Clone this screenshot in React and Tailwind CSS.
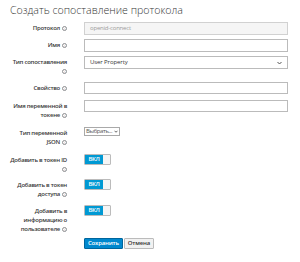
import React from "react";

const Info = () => (
    <span className="inline-flex items-center justify-center w-[5px] h-[5px] rounded-full border-[0.7px] border-[#8b8d8f] text-[3.5px] leading-none text-[#8b8d8f] align-middle ml-[2px] font-normal">i</span>
);

function Row({label, children, className = ""}) {
    return (
        <div className={`flex items-start ${className}`}>
            <label className="w-[57px] shrink-0 text-right text-[6px] tracking-[-0.25px] leading-[9px] font-semibold text-[#3a3a3a] pt-[2px]">
                {label}
            </label>
            <div className="flex-1 ml-[17px]">{children}</div>
        </div>
    );
}

function Toggle() {
    return (
        <div className="flex h-[11px] w-[27px] border border-[#bbbbbb] rounded-[1px] overflow-hidden">
            <div className="w-[18px] bg-[#0099d3] text-white text-[6px] tracking-[-0.3px] font-semibold flex items-center justify-center">ВКЛ</div>
            <div className="flex-1 bg-[#f5f5f5]" />
        </div>
    );
}

export default function App() {
    return (
        <div className="w-[300px] h-[262px] bg-white px-[10px] pr-[12px] overflow-hidden" style={{fontFamily: '"Open Sans", "Noto Sans", sans-serif'}}>
            <h1 className="text-[10.6px] leading-[14px] font-light text-[#363636] pt-[3px]">Создать сопоставление протокола</h1>

            <div className="mt-[5px]">
                <Row label={<>Протокол<Info /></>} className="mb-[4px]">
                    <div className="h-[13px] border border-[#d1d1d1] bg-[#f5f5f5] text-[6px] tracking-[-0.2px] text-[#9c9c9c] flex items-center px-[5px]">openid-connect</div>
                </Row>
                <Row label={<>Имя<Info /></>} className="mb-[4px]">
                    <div className="h-[13px] border border-[#bbbbbb] bg-white" />
                </Row>
                <Row label={<>Тип сопоставления<br /><Info /></>} className="mb-[6px]">
                    <div className="h-[13px] border border-[#bbbbbb] bg-white text-[6px] tracking-[-0.1px] text-[#363636] flex items-center justify-between px-[5px]">
                        <span>User Property</span>
                        <svg width="5" height="4" viewBox="0 0 10 8"><path d="M1 2 L5 6 L9 2" fill="none" stroke="#555" strokeWidth="2" /></svg>
                    </div>
                </Row>
                <Row label={<>Свойство<Info /></>} className="mb-[6px]">
                    <div className="h-[12px] border border-[#bbbbbb] bg-white" />
                </Row>
                <Row label={<>Имя переменной в<br />токене<Info /></>} className="mb-[7px]">
                    <div className="h-[12px] border border-[#bbbbbb] bg-white" />
                </Row>
                <Row label={<>Тип переменной<br />JSON<Info /></>} className="mb-[7px]">
                    <div className="h-[9px] w-[36px] border border-[#a9a9a9] bg-white text-[6px] tracking-[-0.4px] text-[#555] flex items-center justify-between px-[1px] overflow-hidden">
                        <span>Выбрать...</span>
                        <svg width="4" height="3" viewBox="0 0 10 8" className="shrink-0"><path d="M1 2 L5 6 L9 2" fill="none" stroke="#333" strokeWidth="2" /></svg>
                    </div>
                </Row>
                <Row label={<>Добавить в токен ID<br /><Info /></>} className="mb-[5px]">
                    <Toggle />
                </Row>
                <Row label={<>Добавить в токен<br />доступа<Info /></>} className="mb-[6px]">
                    <Toggle />
                </Row>
                <Row label={<>Добавить в<br />информацию о<br />пользователе<Info /></>} className="mb-[4px]">
                    <Toggle />
                </Row>
                <div className="flex ml-[74px] gap-[1px]">
                    <button className="h-[11px] px-[3px] text-[6px] tracking-[-0.2px] font-semibold text-white bg-[#0088ce] border border-[#00659c] rounded-[1px] flex items-center">Сохранить</button>
                    <button className="h-[11px] px-[3px] text-[6px] tracking-[-0.2px] font-semibold text-[#363636] bg-[#f1f1f1] border border-[#bbbbbb] rounded-[1px] flex items-center">Отмена</button>
                </div>
            </div>
        </div>
    );
}
